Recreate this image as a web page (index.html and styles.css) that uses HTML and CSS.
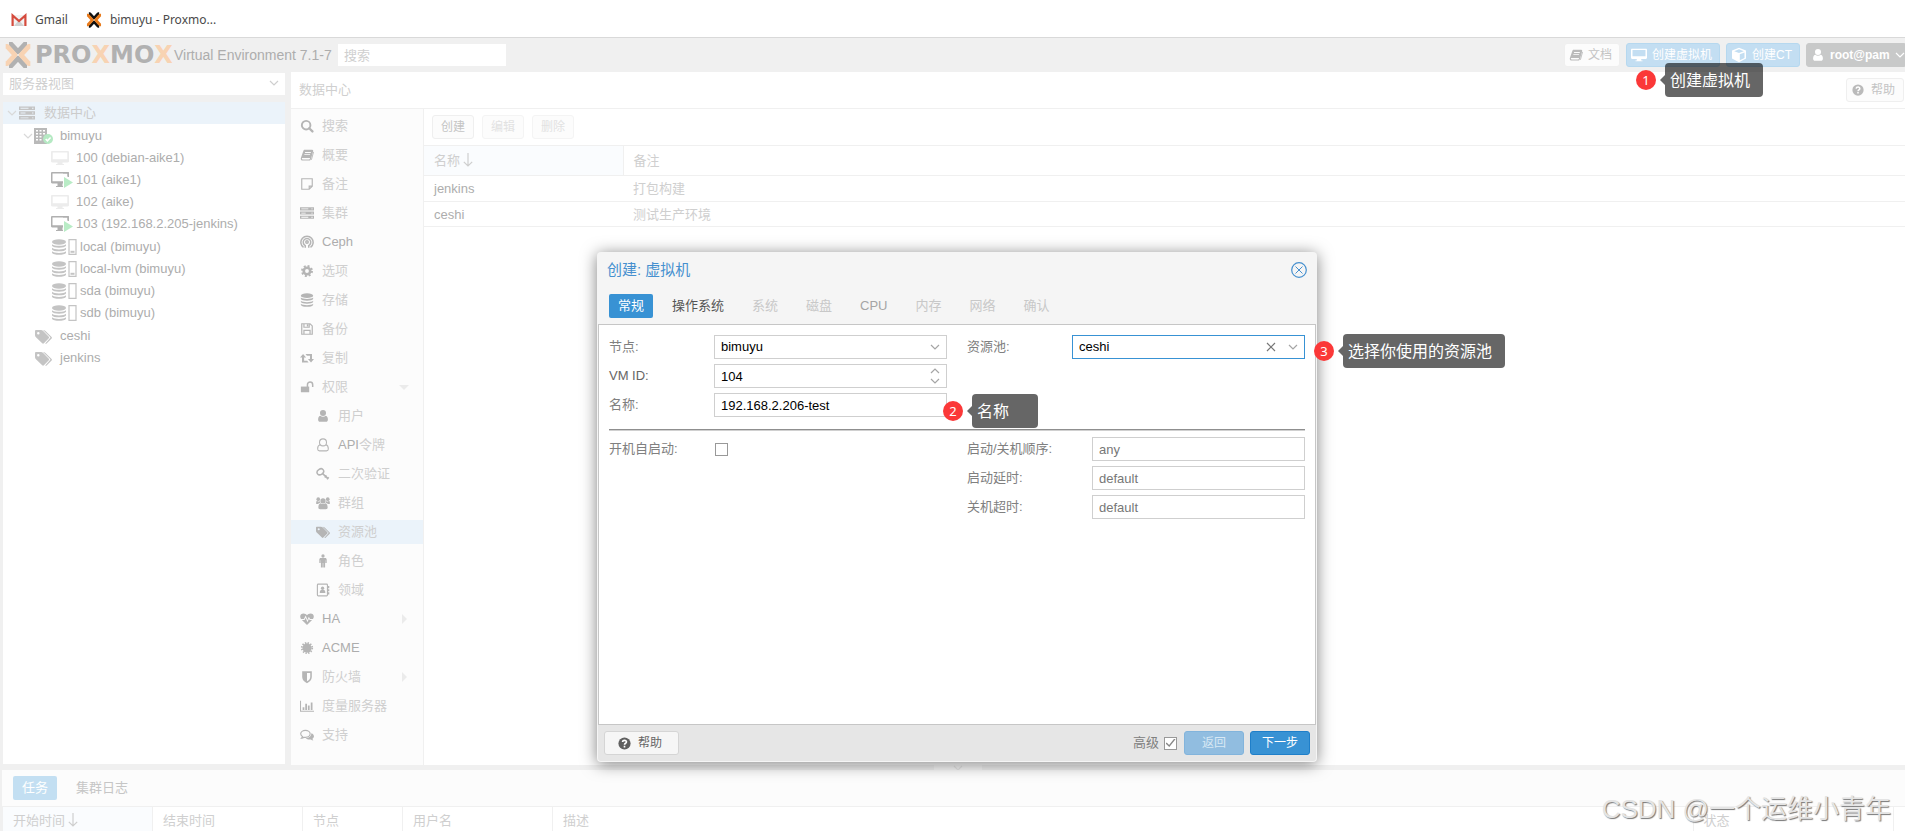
FILE: index.html
```html
<!DOCTYPE html>
<html lang="zh-CN">
<head>
<meta charset="utf-8">
<title>bimuyu - Proxmox Virtual Environment</title>
<link rel="stylesheet" href="styles.css">
</head>
<body>
<svg class="sprite" aria-hidden="true">
  <symbol id="i-x" viewBox="0 0 28 26"><g fill="none" stroke-width="4.800"><path class="lx-a" d="M5 1.800h1.800L14 9.600l7.200-7.800H23M5 24.200h1.800L14 16.400l7.200 7.800H23" stroke-linejoin="round"/><path class="lx-b" d="M1.700 4.300h1.500L11 13l-7.800 8.700H1.700M26.300 4.300h-1.500L17 13l7.800 8.700h1.500" stroke-linejoin="round"/></g></symbol>
  <symbol id="i-gmail" viewBox="0 0 16 16"><path fill="#f2f2f2" d="M1 3h14v11H1z"/><path fill="#d0d0d0" d="M3 14 8 8l5 6z"/><path fill="none" stroke="#d54b3d" stroke-width="2.200" d="M1.600 14V3.500L8 9l6.400-5.500V14"/></symbol>
  <symbol id="i-search" viewBox="0 0 16 16"><circle cx="7" cy="7" r="4.900" fill="none" stroke="currentColor" stroke-width="2.200"/><path d="m10.500 10.500 3.700 3.700" stroke="currentColor" stroke-width="2.600" stroke-linecap="round"/></symbol>
  <symbol id="i-book" viewBox="0 0 16 16"><path fill="currentColor" fill-rule="evenodd" d="M5.500 2h8.500c.9.300 1.300.9 1 1.900l-2.600 9c-.3 1-.9 1.500-1.900 1.500H3.200C1.600 14.400.7 13.200.9 11.700L3.800 3.400C4.100 2.500 4.600 2 5.500 2zM5.900 4.600l-.3 1h6.600l.3-1zM5.100 7l-.3 1h6.600l.3-1zM2.300 11.400c-.3 1 0 1.600.9 1.600h7.100c.5 0 .8-.3 1-.8l.2-.8z"/><path d="M15.500 4.500 13 13.500" stroke="currentColor" fill="none"/></symbol>
  <symbol id="i-note" viewBox="0 0 16 16"><path fill="none" stroke="currentColor" stroke-width="1.300" d="M2 2h12v8.500L10.500 14H2zM14 10.500h-3.500V14"/></symbol>
  <symbol id="i-server" viewBox="0 0 16 16"><path fill="currentColor" fill-rule="evenodd" d="M0 1.500h16v3.500H0zM0 6.300h16v3.500H0zM0 11.100h16v3.500H0zM1.500 2.800h8v.9h-8zm0 4.800h5v.9h-5zm0 4.800h8v.9h-8zM13 2.800h1.500v.9H13zm0 4.800h1.500v.9H13zm0 4.800h1.500v.9H13z"/></symbol>
  <symbol id="i-ceph" viewBox="0 0 16 16"><g fill="none" stroke="currentColor" stroke-width="1.700"><path d="M4 14.200a7 7 0 1 1 8 0"/><path d="M6 14.500v-2.400a4.300 4.300 0 1 1 4 0v2.400"/><circle cx="8" cy="8" r="1.400"/></g></symbol>
  <symbol id="i-gear" viewBox="0 0 16 16"><circle cx="8" cy="8" r="3.700" fill="none" stroke="currentColor" stroke-width="3"/><circle cx="8" cy="8" r="5.700" fill="none" stroke="currentColor" stroke-width="2.200" stroke-dasharray="2.240 2.240"/></symbol>
  <symbol id="i-db" viewBox="0 0 16 16"><g fill="currentColor"><ellipse cx="8" cy="3" rx="7" ry="2.700"/><path d="M1 5.200c2 2.200 12 2.200 14 0v1.600c-1 2.600-13 2.600-14 0zM1 8.800c2 2.200 12 2.200 14 0v1.600c-1 2.600-13 2.600-14 0zM1 12.300c2 2.200 12 2.200 14 0v1.400c-1 2.800-13 2.800-14 0z"/></g></symbol>
  <symbol id="i-floppy" viewBox="0 0 16 16"><path fill="none" stroke="currentColor" stroke-width="1.400" d="M2 2h9.500L14 4.500V14H2zM4.500 14v-4.500h7V14M4.500 2v4h6V2"/><path fill="currentColor" d="M7.800 2.500h1.700v2.700H7.800z"/></symbol>
  <symbol id="i-retweet" viewBox="0 0 16 16"><path fill="currentColor" d="M3.500 3.500 0 7.500h2.300v5.700h7.500L8.200 11.200H4.700V7.500H7zM6.300 3.500l1.600 2h3.500v3.700H9.100l3.500 4 3.400-4h-2.300V3.500z"/></symbol>
  <symbol id="i-unlock" viewBox="0 0 16 16"><path fill="currentColor" d="M1 7.500h9.500v6.500H1z"/><path fill="none" stroke="currentColor" stroke-width="1.700" d="M8.500 8V5.300a3 3 0 0 1 6 0V8"/></symbol>
  <symbol id="i-user" viewBox="0 0 16 16"><path fill="currentColor" d="M8 1.200a3.400 3.400 0 1 1 0 6.900 3.400 3.400 0 0 1 0-6.900zM4.900 7.700c1.600 1.600 4.600 1.600 6.200 0 2 .3 2.600 2.700 2.500 4.700 0 1.500-.9 2.300-2.200 2.300H4.600c-1.300 0-2.200-.8-2.200-2.300 0-2 .500-4.400 2.500-4.700z"/></symbol>
  <symbol id="i-usero" viewBox="0 0 16 16"><g fill="none" stroke="currentColor" stroke-width="1.200"><circle cx="8" cy="5" r="4"/><path d="M4.500 7.700c-2 .6-2.700 3-2.600 5 0 1.200.8 2 2.200 2h7.800c1.400 0 2.200-.8 2.200-2 0-2-.6-4.400-2.600-5"/></g></symbol>
  <symbol id="i-key" viewBox="0 0 16 16"><g fill="none" stroke="currentColor"><ellipse cx="5" cy="5.500" rx="4" ry="3.100" stroke-width="1.700" transform="rotate(-35 5 5.500)"/><path stroke-width="1.800" d="m7.500 7.500 6.700 6M10 12l2-2.300M12.500 14l2-2.300"/></g></symbol>
  <symbol id="i-users" viewBox="0 0 16 16"><g fill="currentColor"><circle cx="8" cy="5.700" r="3"/><circle cx="2.600" cy="3.600" r="2.100"/><circle cx="13.400" cy="3.600" r="2.100"/><path d="M5.300 8.300c1.500 1.300 3.900 1.300 5.400 0 2 .4 2.600 2.300 2.600 4.700 0 1.300-.7 2-2 2H4.700c-1.300 0-2-.7-2-2 0-2.400.6-4.300 2.600-4.700zM.2 9V7.200C.2 6 .7 5.600 1.500 5.600c.8.700 2 .8 2.900.5.100.8.300 1.300.7 1.800C3.800 8 2.800 8.300 2.300 9.200zM15.800 9V7.200c0-1.200-.5-1.600-1.300-1.600-.8.700-2 .8-2.900.5-.1.800-.3 1.300-.7 1.800 1.300.100 2.300.4 2.800 1.300z"/></g></symbol>
  <symbol id="i-tags" viewBox="0 0 17 15"><path fill="currentColor" fill-rule="evenodd" d="M0 2.200C0 1.500.5 1 1.200 1H6c.8 0 1.500.4 2.200 1l5.600 5.700c.5.500.5 1.100 0 1.600l-4.900 5c-.5.500-1.200.5-1.700 0L1.200 8.500C.5 7.800 0 7 0 6.200zM3.300 3a1.200 1.200 0 1 0 0 2.500A1.200 1.200 0 0 0 3.300 3z"/><path fill="currentColor" d="M8 1c1 0 1.700.3 2.500 1l6.100 6c.5.500.5 1 0 1.500l-5 5c-.4.400-1 .4-1.400 0l4.900-5.600c.3-.3.300-.6 0-.9z"/></symbol>
  <symbol id="i-male" viewBox="0 0 16 16"><g fill="currentColor"><circle cx="8" cy="2.300" r="1.900"/><path d="M5.500 4.700h5c1 0 1.700.7 1.700 1.700v3.800h-1.500V7h-.3v8.300H8.300v-5h-.6v5H5.600V7h-.3v3.200H3.800V6.400c0-1 .7-1.700 1.700-1.700z"/></g></symbol>
  <symbol id="i-addr" viewBox="0 0 16 16"><rect x="1.600" y="1.300" width="11.500" height="13.400" rx="1" fill="none" stroke="currentColor" stroke-width="1.300"/><g fill="currentColor"><circle cx="7.500" cy="6" r="1.900"/><path d="M4.300 11.500c0-2.300.6-3.500 1.700-3.600h3c1.100.1 1.700 1.300 1.700 3.600zM13.500 3.500h1.700V6h-1.700zm0 3.500h1.700v2.500h-1.700zm0 3.500h1.700V13h-1.700z"/></g></symbol>
  <symbol id="i-heart" viewBox="0 0 16 16"><path fill="currentColor" d="M8 14.800 2.200 9h3L6.500 6.600l2 5.200 1.700-4L11 9h2.800z"/><path fill="currentColor" d="M1.200 7.900C-1 4.700.8 1.600 4 1.600c1.800 0 3 1 4 2 1-1 2.200-2 4-2 3.200 0 5 3.100 2.800 6.300h-3.300L10.100 5.500l-1.600 3.700-2-5.200-2 3.900z"/></symbol>
  <symbol id="i-cert" viewBox="0 0 16 16"><circle cx="8" cy="8" r="5.300" fill="currentColor"/><circle cx="8" cy="8" r="6" fill="none" stroke="currentColor" stroke-width="2" stroke-dasharray="1.570 1.570"/></symbol>
  <symbol id="i-shield" viewBox="0 0 16 16"><path fill="currentColor" fill-rule="evenodd" d="M2.500 1.500h11V8c0 3.500-2.500 5.500-5.500 7-3-1.500-5.500-3.500-5.500-7zM8 3.300v9.600c2.300-1.300 3.700-2.700 3.700-4.900V3.300z"/></symbol>
  <symbol id="i-bars" viewBox="0 0 16 14"><path fill="currentColor" d="M0 1h1.200v11.300H16v1.200H0zM3 8.500h2v3H3zM6 4.500h2v7H6zM9 6.500h2v5H9zM12.300 3h2v8.500h-2z"/></symbol>
  <symbol id="i-chat" viewBox="0 0 16 16"><path fill="none" stroke="currentColor" stroke-width="1.300" d="M6.200 2.700c3 0 5.400 1.700 5.400 4s-2.400 4-5.400 4c-.6 0-1.200 0-1.700-.2-1 .8-2 1-2.700 1.100.5-.6.9-1.200 1-2-1.300-.7-2-1.700-2-2.900 0-2.300 2.400-4 5.400-4z"/><path fill="currentColor" d="M13 6c3.300 1.300 4 4.500 1.200 6.300.2.800.6 1.300 1.100 1.900-1.200-.1-2-.5-2.900-1.200-2.200.4-4.400 0-5.900-1.300C10.500 11.400 13 9.500 13 6z"/></symbol>
  <symbol id="i-desk" viewBox="0 0 18 16"><path fill="currentColor" fill-rule="evenodd" d="M1.200 1h15.600c.7 0 1.200.5 1.200 1.200v9c0 .7-.5 1.200-1.200 1.200h-5.300v1.700H13V15H5v-.9h1.500v-1.700H1.200c-.7 0-1.200-.5-1.200-1.200v-9C0 1.500.5 1 1.200 1zm.5 1.500v6.800h14.600V2.500z"/></symbol>
  <symbol id="i-vmon" viewBox="0 0 22 16"><path fill="currentColor" fill-rule="evenodd" d="M1.200 0h15.600c.7 0 1.200.5 1.200 1.200v9c0 .7-.5 1.200-1.200 1.200H11.500v2.700h1V15H5v-.9h1.500v-2.700H1.200c-.7 0-1.200-.5-1.200-1.200v-9C0 .5.5 0 1.200 0zm.3 1.400v7.900h15V1.400z"/><path fill="#fff" d="M12 4h10v12H12z"/><path fill="currentColor" d="M12 0h4.800c.7 0 1.200.5 1.200 1.200V5h-1.500V1.400H12z"/><path fill="#b9ecc6" d="M13 5v11l9-5.500z"/></symbol>
  <symbol id="i-node" viewBox="0 0 19 16"><path fill="currentColor" fill-rule="evenodd" d="M0 0h13v16H0zM2 2v1.500h2V2zm3.500 0v1.500h2V2zM9 2v1.500h2V2zM2 5v1.500h2V5zm3.500 0v1.500h2V5zM9 5v1.500h2V5zM2 8v1.500h2V8zm3.500 0v1.500h2V8zM2 11v1.500h2V11zm3.500 0v1.500h2V11z"/><circle cx="14" cy="11" r="5" fill="#b5e9c3"/><path fill="none" stroke="#fff" stroke-width="1.600" d="m11.700 11 1.700 1.800 3.200-3.300"/></symbol>
  <symbol id="i-cube" viewBox="0 0 16 16"><path fill="currentColor" fill-rule="evenodd" d="M8 .8 15 3.500v8L8 15.300 1 11.500v-8zm0 1.500L3.200 4.200 8 6l4.800-1.800zm.8 5v6L13.500 11V5.600z"/></symbol>
  <symbol id="i-help" viewBox="0 0 16 16"><circle cx="8" cy="8" r="7.500" fill="currentColor"/><path fill="none" stroke="#fff" stroke-width="2" d="M5.500 6.200C5.800 3.300 10.600 3.500 10.400 6.200 10.300 7.800 8 7.700 8 9.600M8 10.800v2"/></symbol>
  <symbol id="i-disk" viewBox="0 0 9 16"><path fill="none" stroke="currentColor" stroke-width="1.200" d="M1 .6h7v14.800H1z"/></symbol>
  <symbol id="i-diskon" viewBox="0 0 9 16"><path fill="none" stroke="currentColor" stroke-width="1.200" d="M1 .6h7v14.800H1z"/><path stroke="currentColor" stroke-width="2" d="M2.500 12.800h4"/></symbol>
  <symbol id="i-down" viewBox="0 0 10 10"><path fill="none" stroke="currentColor" stroke-width="1.200" d="m1 3 4 4 4-4"/></symbol>
  <symbol id="i-up" viewBox="0 0 10 10"><path fill="none" stroke="currentColor" stroke-width="1.200" d="m1 7 4-4 4 4"/></symbol>
  <symbol id="i-times" viewBox="0 0 10 10"><path fill="none" stroke="currentColor" stroke-width="1.200" d="m1 1 8 8M9 1 1 9"/></symbol>
  <symbol id="i-sort" viewBox="0 0 10 14"><path fill="none" stroke="currentColor" stroke-width="1.200" d="M5 0v13M.8 8.800 5 13l4.200-4.200"/></symbol>
  <symbol id="i-close" viewBox="0 0 16 16"><g fill="none" stroke="currentColor"><circle cx="8" cy="8" r="7.300" stroke-width="1.200"/><path d="m4.500 4.500 7 7M11.500 4.500l-7 7"/></g></symbol>
</svg>

<nav class="bookmarks" aria-label="书签">
  <a href="#"><svg class="ic"><use href="#i-gmail"/></svg>Gmail</a>
  <a href="#"><svg class="ic fav"><use href="#i-x"/></svg>bimuyu - Proxmo...</a>
</nav>

<header class="top">
  <div class="brand"><svg class="logo"><use href="#i-x"/></svg><span class="word">PRO<b>X</b>MO<b>X</b></span></div>
  <span class="ver">Virtual Environment 7.1-7</span>
  <input class="search" type="text" placeholder="搜索" aria-label="搜索">
  <div class="actions">
    <button class="btn"><svg class="ic"><use href="#i-book"/></svg>文档</button>
    <button class="btn blue"><svg class="ic"><use href="#i-desk"/></svg>创建虚拟机</button>
    <button class="btn blue"><svg class="ic"><use href="#i-cube"/></svg>创建CT</button>
    <button class="btn account"><svg class="ic"><use href="#i-user"/></svg>root@pam<svg class="chev"><use href="#i-down"/></svg></button>
  </div>
</header>

<div class="main">
  <aside class="side">
    <div class="pick"><select aria-label="视图"><option>服务器视图</option></select><svg class="chev"><use href="#i-down"/></svg></div>
    <ul class="tree">
      <li class="sel zh l0"><svg class="chev"><use href="#i-down"/></svg><svg class="ic"><use href="#i-server"/></svg><span>数据中心</span></li>
      <li class="l1"><svg class="chev"><use href="#i-down"/></svg><svg class="ic wide"><use href="#i-node"/></svg><span>bimuyu</span></li>
      <li class="l2"><svg class="ic vm off"><use href="#i-desk"/></svg><span>100 (debian-aike1)</span></li>
      <li class="l2"><svg class="ic vm"><use href="#i-vmon"/></svg><span>101 (aike1)</span></li>
      <li class="l2"><svg class="ic vm off"><use href="#i-desk"/></svg><span>102 (aike)</span></li>
      <li class="l2"><svg class="ic vm"><use href="#i-vmon"/></svg><span>103 (192.168.2.205-jenkins)</span></li>
      <li class="group"><ul>
        <li class="l2 st"><svg class="ic"><use href="#i-db"/></svg><svg class="disk"><use href="#i-diskon"/></svg><span>local (bimuyu)</span></li>
        <li class="l2 st"><svg class="ic"><use href="#i-db"/></svg><svg class="disk"><use href="#i-diskon"/></svg><span>local-lvm (bimuyu)</span></li>
        <li class="l2 st"><svg class="ic"><use href="#i-db"/></svg><svg class="disk"><use href="#i-disk"/></svg><span>sda (bimuyu)</span></li>
        <li class="l2 st"><svg class="ic"><use href="#i-db"/></svg><svg class="disk"><use href="#i-disk"/></svg><span>sdb (bimuyu)</span></li>
      </ul></li>
      <li class="pool"><svg class="ic"><use href="#i-tags"/></svg><span>ceshi</span></li>
      <li class="pool"><svg class="ic"><use href="#i-tags"/></svg><span>jenkins</span></li>
    </ul>
  </aside>

  <section class="center">
    <div class="crumb"><h1>数据中心</h1><button class="btn"><svg class="ic"><use href="#i-help"/></svg>帮助</button></div>
    <div class="split">
      <nav class="menu" aria-label="数据中心">
        <a href="#"><svg class="ic"><use href="#i-search"/></svg>搜索</a>
        <a href="#"><svg class="ic"><use href="#i-book"/></svg>概要</a>
        <a href="#"><svg class="ic"><use href="#i-note"/></svg>备注</a>
        <a href="#"><svg class="ic"><use href="#i-server"/></svg>集群</a>
        <a href="#" class="en"><svg class="ic"><use href="#i-ceph"/></svg>Ceph</a>
        <a href="#"><svg class="ic"><use href="#i-gear"/></svg>选项</a>
        <a href="#"><svg class="ic"><use href="#i-db"/></svg>存储</a>
        <a href="#"><svg class="ic"><use href="#i-floppy"/></svg>备份</a>
        <a href="#"><svg class="ic"><use href="#i-retweet"/></svg>复制</a>
        <a href="#" class="open"><svg class="ic"><use href="#i-unlock"/></svg>权限</a>
        <a href="#" class="sub"><svg class="ic"><use href="#i-user"/></svg>用户</a>
        <a href="#" class="sub"><svg class="ic"><use href="#i-usero"/></svg><span><span class="en">API</span>令牌</span></a>
        <a href="#" class="sub"><svg class="ic"><use href="#i-key"/></svg>二次验证</a>
        <a href="#" class="sub"><svg class="ic"><use href="#i-users"/></svg>群组</a>
        <a href="#" class="sub sel"><svg class="ic"><use href="#i-tags"/></svg>资源池</a>
        <a href="#" class="sub"><svg class="ic"><use href="#i-male"/></svg>角色</a>
        <a href="#" class="sub"><svg class="ic"><use href="#i-addr"/></svg>领域</a>
        <a href="#" class="en more"><svg class="ic"><use href="#i-heart"/></svg>HA</a>
        <a href="#" class="en"><svg class="ic"><use href="#i-cert"/></svg>ACME</a>
        <a href="#" class="more"><svg class="ic"><use href="#i-shield"/></svg>防火墙</a>
        <a href="#"><svg class="ic"><use href="#i-bars"/></svg>度量服务器</a>
        <a href="#"><svg class="ic"><use href="#i-chat"/></svg>支持</a>
      </nav>
      <div class="content">
        <div class="tools"><button class="btn">创建</button><button class="btn" disabled>编辑</button><button class="btn" disabled>删除</button></div>
        <table class="grid pools">
          <thead><tr><th class="sorted">名称<svg class="sort"><use href="#i-sort"/></svg></th><th>备注</th></tr></thead>
          <tbody><tr><td class="en">jenkins</td><td>打包构建</td></tr><tr><td class="en">ceshi</td><td>测试生产环境</td></tr></tbody>
        </table>
      </div>
    </div>
  </section>
</div>

<div class="splitter"><button aria-label="折叠"><svg class="chev"><use href="#i-down"/></svg></button></div>

<footer class="log">
  <div class="logtabs"><button class="on">任务</button><button>集群日志</button></div>
  <table class="grid tasks">
    <thead><tr><th class="sorted c150">开始时间<svg class="sort"><use href="#i-sort"/></svg></th><th class="c150">结束时间</th><th class="c100">节点</th><th class="c150">用户名</th><th>描述</th><th class="c200">状态</th><th class="end"></th></tr></thead>
  </table>
</footer>

<div class="dialog" role="dialog" aria-labelledby="dlg-title">
  <div class="dhead"><h2 id="dlg-title">创建: 虚拟机</h2><button aria-label="关闭"><svg class="ic"><use href="#i-close"/></svg></button></div>
  <div class="dtabs"><button class="on">常规</button><button class="next">操作系统</button><button disabled>系统</button><button disabled>磁盘</button><button class="cpu" disabled>CPU</button><button disabled>内存</button><button disabled>网络</button><button disabled>确认</button></div>
  <form class="dbody">
    <div class="cols">
      <div class="col">
        <div class="field"><label for="node">节点:</label><div class="ctl"><select id="node"><option>bimuyu</option></select><svg class="chev"><use href="#i-down"/></svg></div></div>
        <div class="field"><label class="en" for="vmid">VM ID:</label><div class="ctl"><input id="vmid" type="text" value="104"><span class="spin"><svg class="chev"><use href="#i-up"/></svg><svg class="chev"><use href="#i-down"/></svg></span></div></div>
        <div class="field"><label for="vmname">名称:</label><div class="ctl"><input id="vmname" type="text" value="192.168.2.206-test"></div></div>
      </div>
      <div class="col">
        <div class="field"><label for="pool">资源池:</label><div class="ctl focus"><select id="pool"><option>ceshi</option></select><svg class="chev clear"><use href="#i-times"/></svg><svg class="chev"><use href="#i-down"/></svg></div></div>
      </div>
    </div>
    <hr>
    <div class="cols">
      <div class="col"><div class="field"><label for="boot">开机自启动:</label><input id="boot" type="checkbox"></div></div>
      <div class="col wide">
        <div class="field"><label for="order">启动/关机顺序:</label><div class="ctl"><input id="order" type="text" placeholder="any"></div></div>
        <div class="field"><label for="up">启动延时:</label><div class="ctl"><input id="up" type="text" placeholder="default"></div></div>
        <div class="field"><label for="down">关机超时:</label><div class="ctl"><input id="down" type="text" placeholder="default"></div></div>
      </div>
    </div>
  </form>
  <div class="dfoot">
    <button class="fbtn help"><svg class="ic"><use href="#i-help"/></svg>帮助</button>
    <label class="adv" for="adv">高级</label><input id="adv" type="checkbox" checked>
    <button class="fbtn prim" disabled>返回</button>
    <button class="fbtn prim">下一步</button>
  </div>
</div>

<div class="note n1"><span class="num">1</span><span class="tip">创建虚拟机</span></div>
<div class="note n2"><span class="num">2</span><span class="tip">名称</span></div>
<div class="note n3"><span class="num">3</span><span class="tip">选择你使用的资源池</span></div>
<div class="mark">CSDN @一个运维小青年</div>
</body>
</html>
```

FILE: styles.css
```css
* { box-sizing: border-box; }
body {
  margin: 0;
  height: 100vh;
  display: flex;
  flex-direction: column;
  position: relative;
  overflow: hidden;
  background: #f0f0f0;
  color: #cfcfcf;
  font: 13px/18px "Liberation Sans", "Noto Sans CJK SC", sans-serif;
}
button, input, select { font: inherit; color: inherit; margin: 0; border-radius: 0; }
button { border: 0; background: none; padding: 0; }
select { appearance: none; }
a { color: inherit; text-decoration: none; }
ul { list-style: none; margin: 0; padding: 0; }
h1, h2 { margin: 0; font-weight: 400; }
table { border-collapse: collapse; border-spacing: 0; }
.sprite { position: absolute; width: 0; height: 0; }
.ic { width: 14px; height: 14px; flex: none; }
.chev { width: 10px; height: 10px; flex: none; }
.en { color: #adadad; }

.bookmarks {
  display: flex;
  gap: 18px;
  height: 38px;
  flex: none;
  align-items: center;
  padding: 2px 11px 0;
  background: #fff;
  border-bottom: 1px solid #d9d9d9;
  color: #4a4a4a;
  font: 12px/18px "Noto Sans", sans-serif;
}
.bookmarks a { display: flex; align-items: center; gap: 8px; }
.bookmarks .ic { width: 16px; height: 16px; }
.fav { --lx-a: #111; --lx-b: #e87b1c; }
.lx-a { stroke: var(--lx-a, #b1b1b1); }
.lx-b { stroke: var(--lx-b, #f8d3b3); }

.top { display: flex; align-items: center; height: 34px; flex: none; padding-left: 4px; }
.brand { display: flex; align-items: center; gap: 3px; width: 170px; flex: none; }
.logo { width: 28px; height: 26px; flex: none; }
.word { font: bold 24px/26px "DejaVu Sans", sans-serif; color: #b1b1b1; }
.word b { color: #f8d3b3; }
.ver { width: 164px; font-size: 14px; color: #adadad; white-space: nowrap; }
.search { width: 168px; height: 22px; border: 0; padding: 0 6px; background: #fff; }
::placeholder { color: #cfcfcf; opacity: 1; }
.actions { display: flex; gap: 6px; margin-left: auto; }
.btn {
  display: flex;
  align-items: center;
  justify-content: center;
  gap: 5px;
  height: 24px;
  padding: 0 8px;
  border: 1px solid #efefef;
  border-radius: 3px;
  background: #fcfcfc;
  color: #c4c4c4;
  font-size: 12px;
  white-space: nowrap;
}
.btn .ic { color: #bababa; }
.btn:disabled { color: #e2e2e2; border-color: #f4f4f4; }
.top .btn { padding: 0 7px 0 4px; }
.top .btn.blue { background: #c3def2; border-color: #b6d8ef; color: #fff; }
.top .blue .ic { color: #fff; width: 16px; height: 16px; }
.top .account { width: 99px; justify-content: flex-start; background: #c8c9c9; border-color: #c8c9c9; color: #fff; font-weight: 700; border-radius: 3px 0 0 3px; padding: 0 1px 0 4px; }
.top .account .ic { color: #fff; }
.account .chev { margin-left: auto; }

.main { display: flex; flex: 1; min-height: 0; gap: 6px; }
.side { width: 282px; margin: 1px 0 1px 3px; flex: none; display: flex; flex-direction: column; gap: 7px; }
.pick { position: relative; }
.pick select { display: block; width: 100%; height: 22px; border: 0; background: #fff; padding: 0 6px; }
.pick .chev { position: absolute; right: 6px; top: 5px; }
.tree { flex: 1; background: #fff; color: #adadad; }
.tree li { display: flex; align-items: center; height: 22px; }
.tree .group { display: block; height: auto; padding: 1px 0; }
.tree .zh { color: #cbcbcb; margin-bottom: 1px; }
.tree .sel { background: #ebf3fa; }
.tree .chev { color: #d9d9d9; }
.tree .ic { width: 16px; height: 16px; color: #c4c4c4; }
.l0 { padding-left: 4px; gap: 2px; }
.l0 span { margin-left: 7px; }
.l1 { padding-left: 20px; gap: 1px; }
.tree .wide { width: 19px; color: #b9b9b9; }
.l1 span { margin-left: 6px; }
.l2 { padding-left: 48px; }
.tree .vm { width: 22px; height: 16px; margin-right: 3px; color: #b0b0b0; }
.tree .off { width: 18px; margin-right: 7px; color: #ececec; }
.st { gap: 1px; }
.disk { width: 9px; height: 16px; color: #c4c4c4; }
.st span { margin-left: 2px; }
.pool { padding-left: 32px; gap: 8px; }
.tree .pool .ic { width: 17px; height: 15px; }

.center { flex: 1; min-width: 0; display: flex; flex-direction: column; background: #fff; }
.crumb { display: flex; align-items: center; justify-content: space-between; height: 37px; flex: none; padding: 0 1px 0 8px; border-bottom: 1px solid #f0f0f0; }
.crumb h1 { font-size: 13px; }
.crumb .btn { gap: 7px; padding: 0 8px 0 5px; }
.crumb .ic { width: 12px; height: 12px; }
.split { flex: 1; display: flex; min-height: 0; }
.menu { width: 133px; flex: none; padding-top: 5px; background: #fcfcfc; border-right: 1px solid #f0f0f0; display: flex; flex-direction: column; gap: 5px; overflow: hidden; }
.menu a { display: flex; align-items: center; gap: 8px; height: 24px; flex: none; padding-left: 9px; }
.menu .ic { color: #b5b5b5; }
.menu .sub { padding-left: 25px; }
.menu .sel { background: #ebf3fa; }
.open::after, .more::after { content: ""; margin: 0 14px 0 auto; border: 5px solid transparent; border-top-color: #ebebeb; border-bottom-width: 0; }
.more::after { border: 5px solid transparent; border-left-color: #ebebeb; border-right-width: 0; margin-right: 16px; }
.content { flex: 1; min-width: 0; }
.tools { display: flex; gap: 8px; padding: 6px 8px; }
.tools .btn { width: 42px; }
.grid { width: 100%; table-layout: fixed; }
.grid th { height: 30px; padding: 0 10px; font-weight: 400; text-align: left; white-space: nowrap; border: 1px solid #f0f0f0; border-width: 1px 1px 1px 0; }
.grid .sorted { background: #fafcfe; }
.grid td { height: 25px; padding: 1px 10px 0; border-bottom: 1px solid #f0f0f0; }
.grid tr:first-child td { height: 26px; }
.pools .sorted { width: 199px; }
.pools th:last-child { border-right: 0; }
.sort { width: 10px; height: 14px; margin-left: 3px; vertical-align: -2px; }

.splitter { height: 5px; flex: none; display: flex; justify-content: center; padding-left: 10px; }
.splitter button { width: 48px; height: 5px; background: #f8f8f8; overflow: hidden; display: flex; justify-content: center; align-items: center; color: #e6e6e6; }
.log { height: 61px; flex: none; margin-left: 2px; background: #fff; overflow: hidden; }
.logtabs { display: flex; gap: 8px; padding: 6px 11px; background: #fcfcfc; }
.logtabs button { height: 24px; padding: 0 11px; border-radius: 2px; color: #c6c6c6; }
.logtabs button.on { width: 44px; padding: 0; background: #c3dff2; color: #fff; }
.tasks th { vertical-align: top; padding-top: 5px; }
.tasks th.sorted { border-left: 1px solid #f0f0f0; }
.c100 { width: 100px; }
.c150 { width: 150px; }
.c200 { width: 200px; }
.tasks .end { width: 12px; padding: 0; border-right: 0; }

.dialog {
  position: absolute;
  left: 597px;
  top: 252px;
  width: 720px;
  min-height: 510px;
  display: flex;
  flex-direction: column;
  padding: 1px;
  border-radius: 4px;
  background: #f5f5f5;
  box-shadow: 0 2px 16px rgba(0, 0, 0, .5);
  color: #808080;
}
.dhead { display: flex; align-items: center; justify-content: space-between; height: 34px; padding: 0 9px; color: #4690cf; }
.dhead h2 { font-size: 15px; line-height: 20px; }
.dhead button { display: flex; }
.dhead .ic { width: 16px; height: 16px; }
.dtabs { display: flex; gap: 10px; padding: 7px 11px 6px; height: 37px; }
.dtabs button { height: 24px; padding: 0 9px; border-radius: 2px; white-space: nowrap; }
.dtabs button.on { background: #3892d4; color: #fff; }
.dtabs .next { color: #555; }
.dtabs button:disabled { color: #c8c8c8; }
.dtabs .cpu:disabled { color: #a5a5a5; }
.dbody { flex: 1; border: 1px solid #c6c6c6; background: #fff; padding: 10px; }
.cols { display: grid; grid-template-columns: 338px 338px; gap: 20px; }
.col { display: flex; flex-direction: column; gap: 5px; }
.field { display: flex; align-items: center; height: 24px; }
.field label { width: 105px; flex: none; }
.wide .field label { width: 125px; }
.field .en { color: #666; }
.ctl { position: relative; display: flex; flex: 1; height: 24px; }
.ctl input, .ctl select { width: 100%; min-width: 0; height: 24px; padding: 0 6px; border: 1px solid #cfcfcf; background: #fff; color: #000; outline: 0; }
.ctl.focus select { border-color: #3892d4; }
.ctl ::placeholder { color: #777; }
.ctl > .chev { position: absolute; right: 7px; top: 7px; color: #a5a5a5; }
.ctl > .clear { right: 29px; color: #777; }
.spin { position: absolute; right: 7px; top: 2px; display: flex; flex-direction: column; color: #a5a5a5; }
hr { width: 696px; margin: 12px 0 6px; border: 0; border-top: 1px solid #8f8f8f; border-bottom: 1px solid #d0d0d0; }
input[type="checkbox"] { appearance: none; width: 13px; height: 13px; flex: none; border: 1px solid #999; background: #fff; display: grid; place-items: center; margin: 0 1px; }
input[type="checkbox"]:checked::before { content: ""; width: 10px; height: 9px; background: #888; clip-path: polygon(0 55%, 12% 45%, 36% 72%, 88% 0, 100% 8%, 38% 95%); }
.dfoot { display: flex; align-items: center; gap: 6px; height: 36px; padding: 0 6px; background: #e6e6e6; border-radius: 0 0 3px 3px; color: #808080; }
.fbtn { width: 60px; height: 24px; border: 1px solid #d5d5d5; border-radius: 3px; background: #f6f6f6; font-size: 12px; }
.help { display: flex; width: 75px; align-items: center; gap: 7px; padding-left: 13px; margin-right: auto; color: #666; }
.help .ic { width: 13px; height: 13px; color: #606060; }
.prim { background: #3892d4; border-color: #1f7fc9; color: #fff; }
.prim:disabled { background: #91bde0; border-color: #82b4dc; color: #d8e8f4; }
.adv { margin-right: -2px; }

.note { position: absolute; display: flex; align-items: center; gap: 19px; height: 34px; }
.num { width: 20px; height: 20px; margin-right: -10px; border-radius: 50%; background: #fb3838; color: #fff; text-align: center; font: 13px/20px "Noto Sans", sans-serif; }
.tip { position: relative; height: 34px; padding: 1px 10px 0 5px; border-radius: 4px; background: rgba(0, 0, 0, .6); color: #fff; font-size: 16px; line-height: 34px; white-space: nowrap; }
.tip::before { content: ""; position: absolute; left: -5px; top: 12px; border: 5px solid transparent; border-right-color: #666; border-left-width: 0; }
.n1 { left: 1636px; top: 63px; }
.n1 .tip { min-width: 98px; }
.n2 { left: 943px; top: 394px; }
.n2 .tip { min-width: 66px; }
.n3 { left: 1314px; top: 334px; }
.n3 .tip { min-width: 162px; }
.mark { position: absolute; right: 14px; bottom: 4px; font-size: 26px; line-height: 36px; color: #e4e4e4; text-shadow: 1px 1px 1px #777; white-space: nowrap; }
```
